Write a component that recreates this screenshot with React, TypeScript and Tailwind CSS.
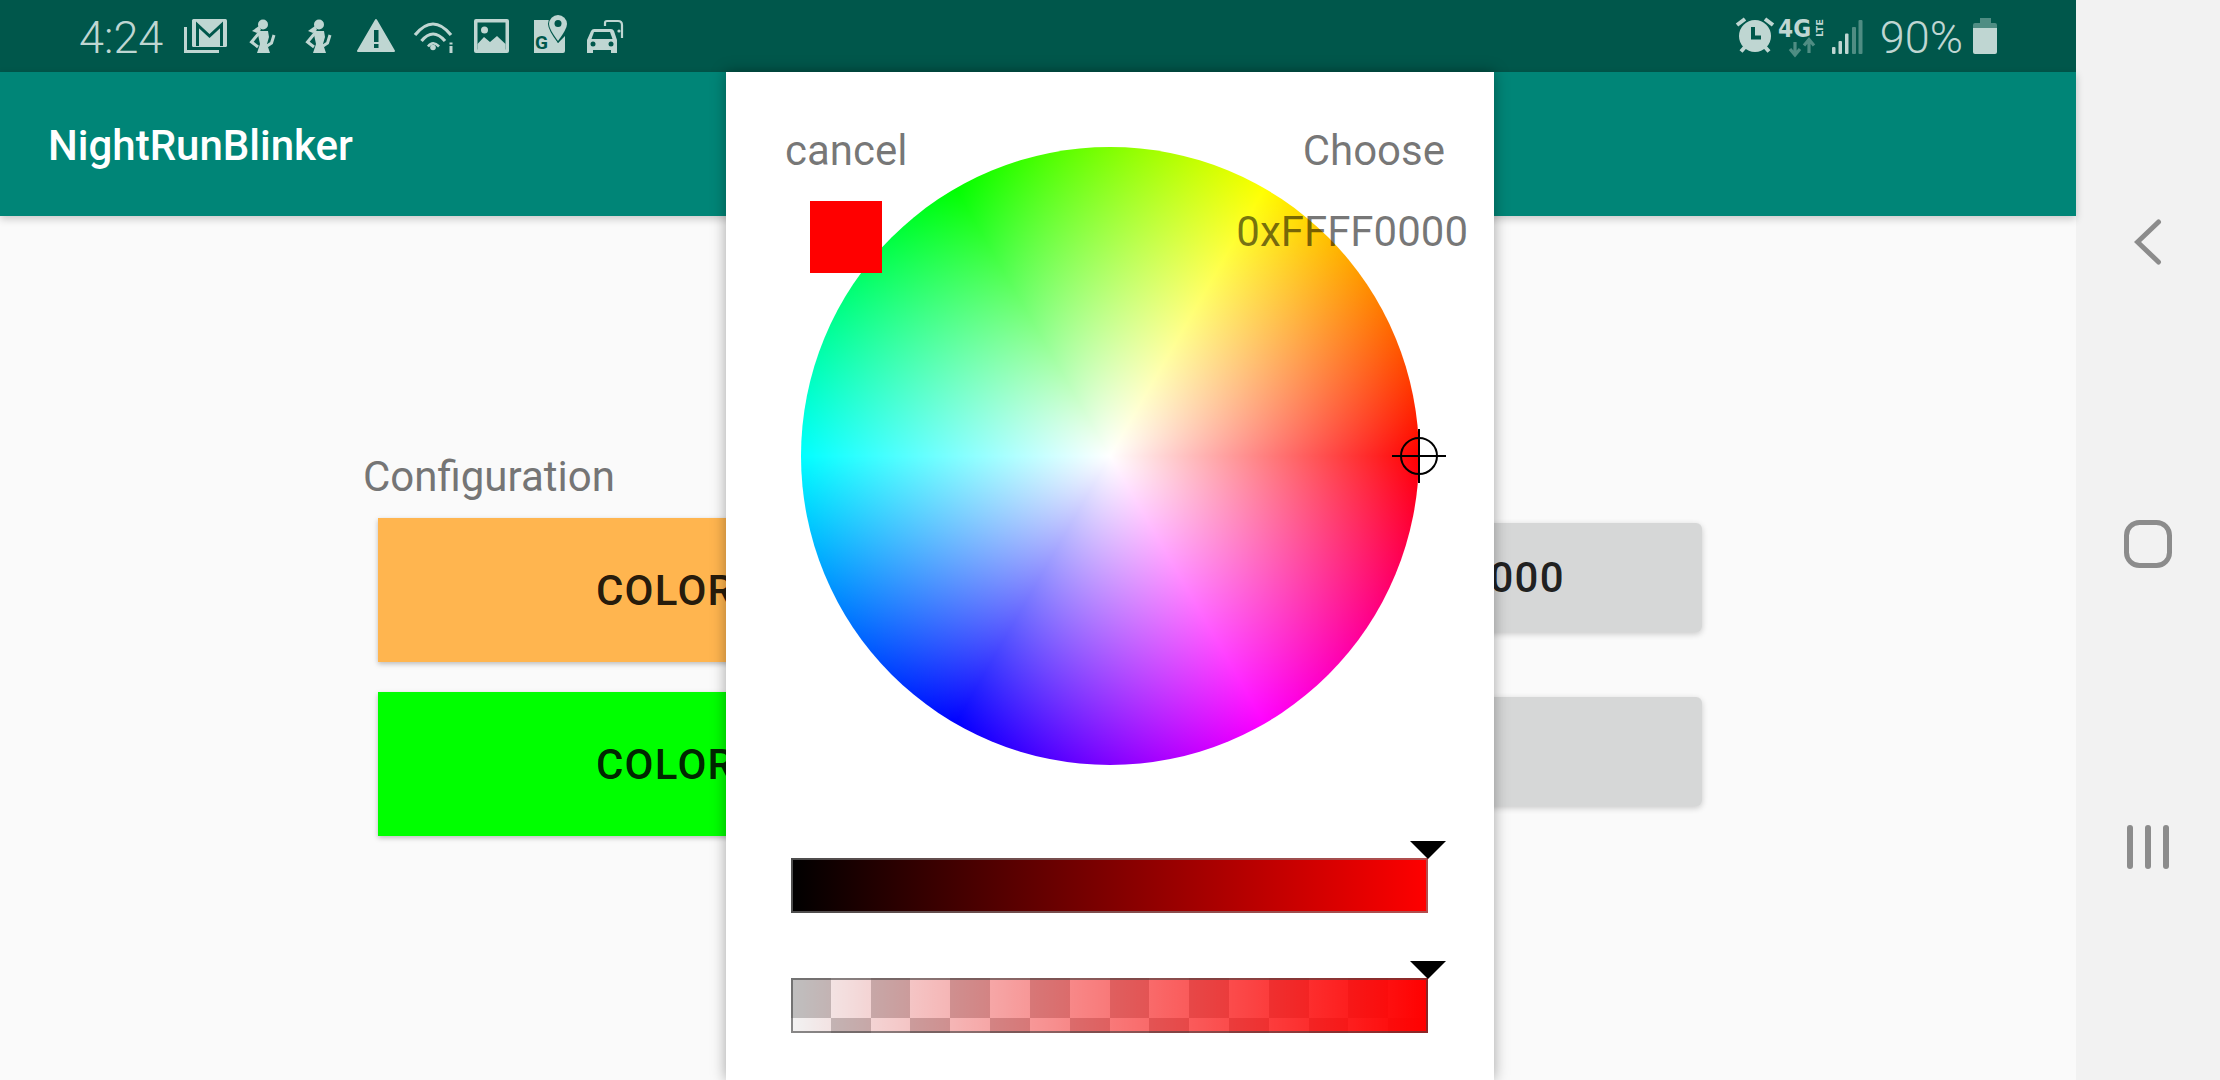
const ICON = '#bfd6d2';
const DIM = '#4f8d83';
const DARK = '#00574B';

// all status icons share a 72px tall viewBox so y values read straight off the screenshot
function Gmail() {
  return (
    <svg viewBox="0 0 44 72" className="h-[72px] w-[44px] ml-[18px]">
      <path d="M2.5 27V51.5H36" fill="none" stroke={ICON} strokeWidth="3" />
      <rect x="9" y="19" width="35" height="28" rx="1.5" fill={ICON} />
      <path d="M14.5 46V25L26.500 36L38.500 25V46" fill="none" stroke={DARK} strokeWidth="3" />
    </svg>
  );
}

function Figure({ className }: { className: string }) {
  return (
    <svg viewBox="0 0 28 72" className={`h-[72px] w-[28px] ${className}`}>
      <circle cx="15" cy="24.500" r="5" fill={ICON} />
      <path d="M11 26L4 31L9 33L13 30Z" fill={ICON} />
      <path d="M9.500 31H20L21 37L19 44L22 53H9L12 44L10.500 37Z" fill={ICON} />
      <path d="M11 33L3.500 42L10 47" fill="none" stroke={ICON} strokeWidth="3" />
      <path d="M26 35L23.500 43L19 46" fill="none" stroke={ICON} strokeWidth="3" />
    </svg>
  );
}

function Warning() {
  return (
    <svg viewBox="0 0 38 72" className="h-[72px] w-[38px] ml-[25px]">
      <path d="M19 20L37 51H1Z" fill={ICON} stroke={ICON} strokeWidth="2" strokeLinejoin="round" />
      <rect x="17" y="30" width="4.500" height="12" fill={DARK} />
      <rect x="17" y="44" width="4.500" height="4" fill={DARK} />
    </svg>
  );
}

function Wifi() {
  return (
    <svg viewBox="0 0 42 72" className="h-[72px] w-[42px] ml-[18px]" fill="none" stroke={ICON} strokeWidth="3.2">
      <path d="M2 35Q20 13 38 35" />
      <path d="M8.500 41Q20 27 32 41" />
      <path d="M15 46.500Q20 40 26 46.500" strokeWidth="2.600" />
      <circle cx="20" cy="47.500" r="2.800" fill={ICON} stroke="none" />
      <path d="M38 46V53M38 42.500V44.500" strokeWidth="3" />
    </svg>
  );
}

function ImageIcon() {
  return (
    <svg viewBox="0 0 35 72" className="h-[72px] w-[35px] ml-[19px]">
      <rect y="19" width="35" height="34" rx="2" fill={ICON} />
      <rect x="3.500" y="22.500" width="28" height="27" fill={DARK} />
      <circle cx="10.500" cy="30" r="3.500" fill={ICON} />
      <path d="M3.500 44L10 37L16 42L23 36L31.500 44V50H3.500Z" fill={ICON} />
    </svg>
  );
}

function Maps() {
  return (
    <svg viewBox="0 0 35 72" className="h-[72px] w-[35px] ml-[23px]">
      <path d="M2 20H22V35L26 43L33 36V51Q33 53 31 53H2Z" fill={ICON} />
      <path
        d="M26 13.500A10.500 10.500 0 0 1 36 24Q36 30 26 43Q16 30 16 24A10.500 10.500 0 0 1 26 13.500Z"
        fill={DARK}
      />
      <path
        d="M26 15A9 9 0 0 1 35 24Q35 29 26 41Q17 29 17 24A9 9 0 0 1 26 15Z"
        fill={ICON}
      />
      <circle cx="26" cy="23.500" r="3.500" fill={DARK} />
      <text x="3" y="49" fontSize="19" fontWeight="700" fill={DARK} fontFamily="Roboto, sans-serif">
        G
      </text>
    </svg>
  );
}

function Car() {
  return (
    <svg viewBox="0 0 37 72" className="h-[72px] w-[37px] ml-[20px]">
      <path d="M18 26V23Q18 21 20 21H31Q35 21 35 25V38" fill="none" stroke={ICON} strokeWidth="2.200" />
      <circle cx="32" cy="31" r="1.600" fill={ICON} />
      <path
        d="M7 29H24Q26 29 27 31L30 40V53H24V50H6V53H0V40L4 31Q5 29 7 29Z"
        fill={ICON}
      />
      <path d="M7 32H23L25.500 39H4.500Z" fill={DARK} />
      <circle cx="6" cy="44" r="2.500" fill={DARK} />
      <circle cx="24" cy="44" r="2.500" fill={DARK} />
    </svg>
  );
}

function Alarm() {
  return (
    <svg viewBox="0 0 40 72" className="h-[72px] w-[40px]">
      <circle cx="20" cy="36" r="16" fill={ICON} />
      <path d="M18 27V37.500H26" fill="none" stroke={DARK} strokeWidth="4" />
      <path d="M2 25L10 19M30 19L38 25M6 51.500L10 47M30 47L34 51.500" stroke={ICON} strokeWidth="4" />
    </svg>
  );
}

function Lte() {
  return (
    <svg viewBox="0 0 46 72" className="h-[72px] w-[46px] ml-[3px]">
      <text x="0" y="37" fontSize="25" fontWeight="700" fill={ICON} fontFamily="'DejaVu Sans', sans-serif" textLength="33" lengthAdjust="spacingAndGlyphs">
        4G
      </text>
      <text
        transform="translate(45 37) rotate(-90)"
        fontSize="9.500"
        fontWeight="700"
        fill={ICON}
        fontFamily="'DejaVu Sans', sans-serif"
        textLength="18"
        lengthAdjust="spacingAndGlyphs"
      >
        LTE
      </text>
      <path d="M17 42V54M12 49L17 55L22 49" fill="none" stroke={DIM} strokeWidth="3.200" />
      <path d="M31 53V40M26 45.500L31 39.500L36 45.500" fill="none" stroke={DIM} strokeWidth="3.200" />
    </svg>
  );
}

function Signal() {
  return (
    <svg viewBox="0 0 31 72" className="h-[72px] w-[31px] ml-[8px]">
      <rect x="0" y="47" width="3.500" height="7" rx="1" fill={ICON} />
      <rect x="6.500" y="41" width="3.500" height="13" rx="1" fill={ICON} />
      <rect x="13" y="33.500" width="3.500" height="20.500" rx="1" fill={ICON} />
      <rect x="20" y="27" width="4" height="27" rx="1" fill={DIM} />
      <rect x="26.500" y="20" width="4" height="34" rx="1" fill={DIM} />
    </svg>
  );
}

function Battery() {
  return (
    <svg viewBox="0 0 24 72" className="h-[72px] w-[24px] ml-[10px]">
      <path d="M7 18H18V23H22Q24 23 24 25V28H0V25Q0 23 2 23H7Z" fill={DIM} />
      <path d="M0 28H24V52Q24 54 22 54H2Q0 54 0 52Z" fill={ICON} />
    </svg>
  );
}

function StatusBar() {
  return (
    <div className="h-[72px] bg-[#00574B] flex items-center pl-[79px] pr-[79px] justify-between">
      <div className="flex items-center">
        <span className="pt-[2px] text-[45px] font-light text-[#bfd6d2] leading-none w-[86px] whitespace-nowrap">4:24</span>
        <Gmail />
        <Figure className="ml-[21px]" />
        <Figure className="ml-[28px]" />
        <Warning />
        <Wifi />
        <ImageIcon />
        <Maps />
        <Car />
      </div>
      <div className="flex items-center">
        <Alarm />
        <Lte />
        <Signal />
        <span className="pt-[2px] ml-[17px] text-[45px] font-light text-[#bfd6d2] leading-none whitespace-nowrap">90%</span>
        <Battery />
      </div>
    </div>
  );
}

function ColorRow({ color, label, value }: { color: string; label: string; value?: string }) {
  return (
    <div className="flex justify-between items-start">
      <button className={`w-[612px] h-[144px] ${color} shadow-[0_2px_5px_rgba(0,0,0,0.25)] text-[42px] font-medium tracking-[0.03em] text-black/87`}>
        {label}
      </button>
      <button className="mt-[5px] w-[520px] h-[109px] rounded-[6px] bg-[#d6d7d7] shadow-[0_2px_6px_rgba(0,0,0,0.2)] text-[42px] font-medium tracking-[0.03em] text-black/87">
        {value}
      </button>
    </div>
  );
}

function Triangle() {
  return (
    <svg viewBox="0 0 36 18" className="absolute right-[-18px] top-[-17px] w-[36px] h-[18px]">
      <path d="M0 0H36L18 18Z" fill="#000" />
    </svg>
  );
}

function AlphaBar() {
  const cols = Array.from({ length: 16 }, (_, i) => i);
  return (
    <div className="relative mt-[65px] h-[55px]">
      <div className="relative h-full flex">
        {cols.map((i) => (
          <div key={i} className="flex-1 flex flex-col">
            <div className={`flex-1 ${i % 2 === 0 ? 'bg-[#bfbfbf]' : 'bg-[#f2f2f2]'}`} />
            <div className={`h-[15px] ${i % 2 === 0 ? 'bg-[#f2f2f2]' : 'bg-[#bfbfbf]'}`} />
          </div>
        ))}
        <div className="absolute inset-0 bg-[linear-gradient(to_right,#ff000000,#ff0000)]" />
        <div className="absolute inset-0 border-2 border-[#40404099]" />
      </div>
      <Triangle />
    </div>
  );
}

function ColorPickerDialog() {
  return (
    <div className="absolute left-[726px] top-[72px] w-[768px] h-[1008px] bg-white shadow-[0_0_14px_rgba(0,0,0,0.35)]">
      <div className="pt-[75px]">
        <div className="relative mx-auto w-[618px] h-[618px]">
          <div className="w-full h-full rounded-full bg-[radial-gradient(circle_closest-side,#ffffff,#ffffff00),conic-gradient(from_90deg,#ff0000,#ff00ff,#0000ff,#00ffff,#00ff00,#ffff00,#ff0000)]" />
          <svg viewBox="0 0 54 54" className="absolute right-[-27px] top-[282px] w-[54px] h-[54px]">
            <circle cx="27" cy="27" r="18" fill="none" stroke="#000" strokeWidth="2" />
            <path d="M0 27H54M27 0V54" stroke="#000" strokeWidth="2" />
          </svg>
        </div>
        <div className="ml-[65px] w-[637px]">
          <div className="relative mt-[93px] h-[55px]">
            <div className="h-full border-2 border-[#80808099] bg-origin-border bg-[linear-gradient(to_right,#000000,#ff0000)]" />
            <Triangle />
          </div>
          <AlphaBar />
        </div>
      </div>
      {/* header texts sit on top of the wheel */}
      <div className="absolute left-[59px] right-[49px] top-[54px] flex justify-between text-[42px] leading-[49px] text-black/54">
        <span>cancel</span>
        <span>Choose</span>
      </div>
      <div className="absolute left-[84px] top-[129px] w-[72px] h-[72px] bg-[#ff0000]" />
      <span className="absolute right-[26px] top-[135px] text-[42px] leading-[49px] text-black/54">0xFFFF0000</span>
    </div>
  );
}

export default function App() {
  return (
    <div className="relative w-[2220px] h-[1080px] overflow-hidden flex font-['Roboto',sans-serif] bg-[#f2f2f2]">
      <div className="w-[2076px] h-full flex flex-col bg-[#fafafa]">
        <StatusBar />
        <div className="h-[144px] bg-[#008577] flex items-center pl-[48px] pt-[2px] shadow-[0_3px_8px_rgba(0,0,0,0.2)]">
          <span className="text-[42px] font-medium text-white">NightRunBlinker</span>
        </div>
        <div className="pt-[236px] pl-[363px]">
          <div className="text-[42px] leading-[49px] text-[#757575]">Configuration</div>
          <div className="ml-[15px] mt-[17px] w-[1324px] flex flex-col gap-[30px]">
            <ColorRow color="bg-[#ffb54f]" label="COLOR 1" value="0xFFFF0000" />
            <ColorRow color="bg-[#00ff00]" label="COLOR 2" />
          </div>
        </div>
      </div>
      <div className="w-[144px] h-full flex flex-col items-center">
        <svg viewBox="0 0 28 46" className="mt-[219px] w-[28px] h-[46px]" fill="none" stroke="#8c8c8c" strokeWidth="5" strokeLinecap="round">
          <path d="M24.500 3L3.500 23L24.500 43" />
        </svg>
        <svg viewBox="0 0 48 48" className="mt-[255px] w-[48px] h-[48px]" fill="none" stroke="#8c8c8c" strokeWidth="5">
          <rect x="2.500" y="2.500" width="43" height="43" rx="13" />
        </svg>
        <div className="mt-[257px] flex gap-[12px]">
          <div className="w-[6px] h-[44px] rounded-full bg-[#8c8c8c]" />
          <div className="w-[6px] h-[44px] rounded-full bg-[#8c8c8c]" />
          <div className="w-[6px] h-[44px] rounded-full bg-[#8c8c8c]" />
        </div>
      </div>
      <ColorPickerDialog />
    </div>
  );
}
